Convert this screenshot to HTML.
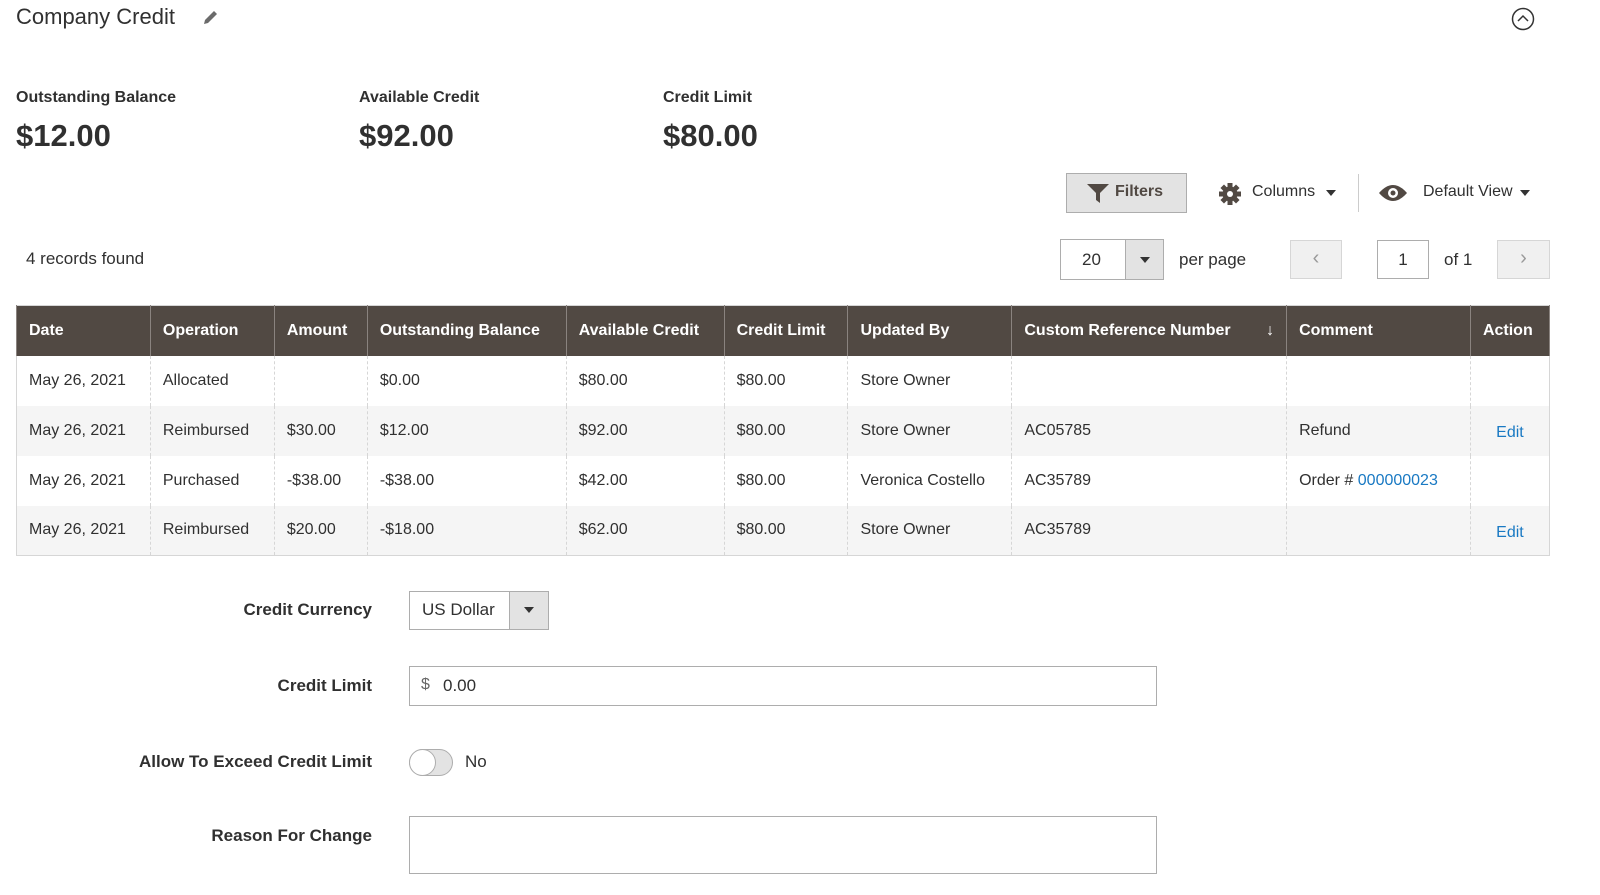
<!DOCTYPE html>
<html><head><meta charset="utf-8"><style>
*{box-sizing:border-box;margin:0;padding:0}
body{width:1600px;height:895px;background:#fff;font-family:"Liberation Sans",sans-serif;color:#303030;position:relative;overflow:hidden}
.a{position:absolute;white-space:nowrap}
table{position:absolute;left:16px;top:305px;width:1534px;border-collapse:collapse;font-size:16px}
th{background:#514943;color:#fff;font-weight:bold;text-align:left;height:50px;padding:0 12px;border-left:1px solid #8a837f;border-right:1px solid #8a837f;font-size:16px}
td{height:50px;padding:0 12px;border-left:1px dashed #d6d6d6;border-right:1px dashed #d6d6d6;color:#303030}
tr.o td{background:#f5f5f5}
table{border:1px solid #d6d6d6}
a{color:#1979c3;text-decoration:none}
.lbl{font-weight:bold;font-size:17px;text-align:right;width:372px;left:0}
</style></head><body>
<div class="a" style="left:16px;top:4px;font-size:22px;color:#303030">Company Credit</div>
<svg class="a" style="left:201px;top:9px" width="18" height="18" viewBox="0 0 18 18"><path d="M3 15 L4 11 L13 2 L16 5 L7 14 Z" fill="#6b6b6b"/></svg>
<svg class="a" style="left:1511px;top:7px" width="24" height="24" viewBox="0 0 24 24"><circle cx="12" cy="12" r="10.5" fill="none" stroke="#333" stroke-width="1.5"/><path d="M7 14 L12 9 L17 14" fill="none" stroke="#333" stroke-width="1.5"/></svg>

<div class="a" style="left:16px;top:89px;font-weight:bold;font-size:16px">Outstanding Balance</div>
<div class="a" style="left:16px;top:118px;font-weight:bold;font-size:31px">$12.00</div>
<div class="a" style="left:359px;top:89px;font-weight:bold;font-size:16px">Available Credit</div>
<div class="a" style="left:359px;top:118px;font-weight:bold;font-size:31px">$92.00</div>
<div class="a" style="left:663px;top:89px;font-weight:bold;font-size:16px">Credit Limit</div>
<div class="a" style="left:663px;top:118px;font-weight:bold;font-size:31px">$80.00</div>

<div class="a" style="left:1066px;top:173px;width:121px;height:40px;background:#e3e3e3;border:1px solid #adadad;font-weight:bold;font-size:16px;color:#514943;padding:9px 0 0 48px">Filters</div>
<svg class="a" style="left:1087px;top:184px" width="22" height="19" viewBox="0 0 22 19"><path d="M0 0 H22 L13 9 V19 L9 16 V9 Z" fill="#514943"/></svg>
<svg class="a" style="left:1218px;top:182px" width="24" height="24" viewBox="0 0 24 24"><g fill="#514943"><circle cx="12" cy="12" r="7.5"/><rect x="9.5" y="1" width="5" height="22"/><rect x="1" y="9.5" width="22" height="5"/><rect x="9.5" y="1" width="5" height="22" transform="rotate(45 12 12)"/><rect x="9.5" y="1" width="5" height="22" transform="rotate(-45 12 12)"/></g><circle cx="12" cy="12" r="3" fill="#fff"/></svg>
<div class="a" style="left:1252px;top:183px;font-size:16px">Columns</div>
<div class="a" style="left:1326px;top:190px;border:5px solid transparent;border-top:6px solid #333;width:0;height:0"></div>
<div class="a" style="left:1358px;top:174px;width:1px;height:38px;background:#ccc"></div>
<svg class="a" style="left:1378px;top:183px" width="30" height="20" viewBox="0 0 30 20"><path d="M1 10 Q15 -6 29 10 Q15 26 1 10Z" fill="#514943"/><circle cx="15" cy="10" r="5" fill="#fff"/><circle cx="15" cy="10" r="2.5" fill="#514943"/></svg>
<div class="a" style="left:1423px;top:183px;font-size:16px">Default View</div>
<div class="a" style="left:1520px;top:190px;border:5px solid transparent;border-top:6px solid #333;width:0;height:0"></div>

<div class="a" style="left:26px;top:249px;font-size:17px">4 records found</div>
<div class="a" style="left:1060px;top:239px;width:104px;height:41px;border:1px solid #adadad"></div>
<div class="a" style="left:1082px;top:250px;font-size:17px">20</div>
<div class="a" style="left:1125px;top:240px;width:38px;height:39px;background:#e3e3e3;border-left:1px solid #adadad"></div>
<div class="a" style="left:1140px;top:257px;border:5px solid transparent;border-top:6px solid #333;width:0;height:0"></div>
<div class="a" style="left:1179px;top:250px;font-size:17px">per page</div>
<div class="a" style="left:1290px;top:240px;width:52px;height:39px;background:#f0f0f0;border:1px solid #d6d6d6;text-align:center;font-size:20px;color:#999;padding-top:6px">&lsaquo;</div>
<div class="a" style="left:1377px;top:240px;width:52px;height:39px;border:1px solid #adadad;text-align:center;font-size:17px;padding-top:9px">1</div>
<div class="a" style="left:1444px;top:250px;font-size:17px">of 1</div>
<div class="a" style="left:1497px;top:240px;width:53px;height:39px;background:#f0f0f0;border:1px solid #d6d6d6;text-align:center;font-size:20px;color:#999;padding-top:6px">&rsaquo;</div>

<table>
<colgroup><col style="width:134px"><col style="width:124px"><col style="width:93px"><col style="width:199px"><col style="width:158px"><col style="width:124px"><col style="width:164px"><col style="width:275px"><col style="width:184px"><col style="width:79px"></colgroup>
<tr><th>Date</th><th>Operation</th><th>Amount</th><th>Outstanding Balance</th><th>Available Credit</th><th>Credit Limit</th><th>Updated By</th><th>Custom Reference Number<span style="float:right;font-weight:normal">&darr;</span></th><th>Comment</th><th>Action</th></tr>
<tr><td>May 26, 2021</td><td>Allocated</td><td></td><td>$0.00</td><td>$80.00</td><td>$80.00</td><td>Store Owner</td><td></td><td></td><td></td></tr>
<tr class="o"><td>May 26, 2021</td><td>Reimbursed</td><td>$30.00</td><td>$12.00</td><td>$92.00</td><td>$80.00</td><td>Store Owner</td><td>AC05785</td><td>Refund</td><td style="text-align:center;padding-top:5px"><a>Edit</a></td></tr>
<tr><td>May 26, 2021</td><td>Purchased</td><td>-$38.00</td><td>-$38.00</td><td>$42.00</td><td>$80.00</td><td>Veronica Costello</td><td>AC35789</td><td>Order # <a>000000023</a></td><td></td></tr>
<tr class="o"><td>May 26, 2021</td><td>Reimbursed</td><td>$20.00</td><td>-$18.00</td><td>$62.00</td><td>$80.00</td><td>Store Owner</td><td>AC35789</td><td></td><td style="text-align:center;padding-top:5px"><a>Edit</a></td></tr>
</table>

<div class="a lbl" style="top:600px">Credit Currency</div>
<div class="a" style="left:409px;top:591px;width:140px;height:39px;border:1px solid #adadad"></div>
<div class="a" style="left:422px;top:600px;font-size:17px">US Dollar</div>
<div class="a" style="left:509px;top:592px;width:39px;height:37px;background:#e3e3e3;border-left:1px solid #adadad"></div>
<div class="a" style="left:524px;top:607px;border:5px solid transparent;border-top:6px solid #333;width:0;height:0"></div>

<div class="a lbl" style="top:676px">Credit Limit</div>
<div class="a" style="left:409px;top:666px;width:748px;height:40px;border:1px solid #adadad"></div>
<div class="a" style="left:421px;top:676px;font-size:16px;color:#666">$</div>
<div class="a" style="left:443px;top:676px;font-size:17px">0.00</div>

<div class="a lbl" style="top:752px">Allow To Exceed Credit Limit</div>
<div class="a" style="left:409px;top:749px;width:44px;height:27px;border:1px solid #adadad;border-radius:14px;background:#e3e3e3"></div>
<div class="a" style="left:409px;top:749px;width:27px;height:27px;border:1px solid #adadad;border-radius:50%;background:#fff"></div>
<div class="a" style="left:465px;top:752px;font-size:17px">No</div>

<div class="a lbl" style="top:826px">Reason For Change</div>
<div class="a" style="left:409px;top:816px;width:748px;height:58px;border:1px solid #adadad"></div>
</body></html>
